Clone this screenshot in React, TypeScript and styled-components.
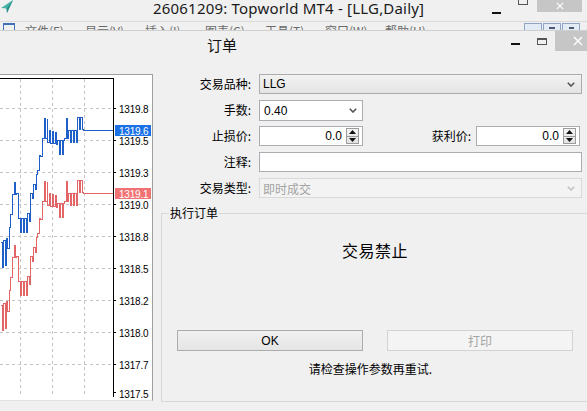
import React from "react";
import styled, { createGlobalStyle } from "styled-components";

const GlobalStyle = createGlobalStyle`
  html, body {
    margin: 0;
    padding: 0;
    background: #f0f0f0;
  }
  body {
    font-family: "Liberation Sans", "Noto Sans CJK SC", sans-serif;
    font-size: 12px;
    color: #000;
  }
  * {
    box-sizing: border-box;
  }
`;

const CJK = `"Noto Sans CJK SC", "Liberation Sans", sans-serif`;

// ---- price chart data ----
type Seg = [number, number, number, number, number];

// blue (ask) tick trajectory: [xStart, xEnd, yStart, yEnd, jitter]
const SEGS: Seg[] = [
  [0, 7, 255, 250, 13],
  [7, 12, 246, 190, 2],
  [12, 16, 188, 188, 6],
  [16, 18, 195, 222, 2],
  [18, 27, 225, 225, 7],
  [27, 30, 220, 208, 7],
  [30, 37, 198, 176, 5],
  [37, 42, 166, 142, 4],
  [42, 47, 128, 128, 10],
  [47, 57, 136, 138, 6],
  [57, 64, 147, 147, 7],
  [64, 68, 128, 128, 10],
  [68, 77, 136, 136, 6],
  [77, 83, 123, 123, 6],
];

const tickPath = (offset: number) => {
  let d = "";
  let i = 0;
  for (const [x0, x1, y0, y1, amp] of SEGS) {
    for (let x = x0; x < x1; x += 1.5) {
      const t = (x - x0) / (x1 - x0);
      const y = Math.round(y0 + (y1 - y0) * t + (i % 2 ? amp : -amp) + offset) + 0.5;
      const px = Math.round(x) + 0.5;
      d += d ? ` H${px} V${y}` : `M${px} ${y}`;
      i++;
    }
  }
  d += ` H83.5 V${130.5 + offset} H113`;
  return d;
};

const PRICES = ["1319.8", "1319.5", "1319.3", "1319.0", "1318.8", "1318.5", "1318.2", "1318.0", "1317.7", "1317.5"];

const MENU = ["文件(F)", "显示(V)", "插入(I)", "图表(C)", "工具(T)", "窗口(W)", "帮助(H)"];

// ---- layout ----
const Screen = styled.div`
  width: 587px;
  height: 411px;
  overflow: hidden;
  background: #f0f0f0;
  display: flex;
  flex-direction: column;
`;

const AppBar = styled.div`
  height: 21px;
  flex-shrink: 0;
  display: flex;
  align-items: flex-start;
  background: #f0f0f0;
`;

const AppTitle = styled.div`
  margin-left: 139px;
  font-family: "Noto Sans", sans-serif;
  font-size: 15px;
  letter-spacing: 0.2px;
  line-height: 17px;
  color: #1a1a1a;
  white-space: nowrap;
`;

const WinControls = styled.div`
  margin-left: auto;
  padding-right: 5px;
  display: flex;
  align-items: flex-start;
`;

const MinGlyph = styled.span<{ $top: number }>`
  display: block;
  width: 9px;
  height: 2px;
  margin-top: ${(p) => p.$top}px;
  background: #111;
`;

const MaxGlyph = styled.span<{ $top: number; $gap: number }>`
  display: block;
  width: 10px;
  height: 7px;
  margin-left: ${(p) => p.$gap}px;
  margin-top: ${(p) => p.$top}px;
  border: 1px solid #555;
  border-top-width: ${(p) => (p.$top < 0 ? 1 : 2)}px;
`;

const CloseBox = styled.span<{ $w: number; $h: number; $gap: number }>`
  display: flex;
  align-items: center;
  justify-content: center;
  width: ${(p) => p.$w}px;
  height: ${(p) => p.$h}px;
  margin-left: ${(p) => p.$gap}px;
  background: #c6c6c6;
  flex-shrink: 0;
`;

const MenuBar = styled.div`
  height: 9px;
  flex-shrink: 0;
  border-top: 1px solid #dadada;
  display: flex;
  align-items: flex-start;
  overflow: hidden;
  background: #f0f0f0;
`;

const MenuIcon = styled.span`
  margin: 1px 0 0 3px;
  width: 12px;
  height: 8px;
  border: 1px solid #3f6fb6;
  border-top-width: 2px;
  flex-shrink: 0;
`;

const MenuItems = styled.div`
  display: flex;
  margin-left: 10px;
`;

const MenuItem = styled.span`
  width: 60px;
  font-family: ${CJK};
  font-size: 12px;
  line-height: 16px;
  margin-top: 1px;
  color: #6a6a6a;
`;

const MdiButtons = styled.div`
  margin-left: auto;
  margin-right: 7px;
  display: flex;
  gap: 1px;
  margin-top: 1px;
`;

const MdiButton = styled.span`
  display: flex;
  justify-content: center;
  width: 18px;
  height: 10px;
  background: #e2ebf6;
  border: 1px solid #8fa4c4;
  padding-top: 3px;
`;

const MdiMark = styled.span<{ $w: number }>`
  width: ${(p) => p.$w}px;
  height: 2px;
  background: #4a5a70;
`;

const Dialog = styled.div`
  flex: 1;
  display: flex;
  flex-direction: column;
  border-top: 1px solid #cfcfcf;
  background: #f0f0f0;
`;

const DialogBar = styled.div`
  height: 20px;
  flex-shrink: 0;
  display: flex;
  align-items: flex-start;
`;

const DialogTitle = styled.div`
  margin-left: 207px;
  margin-top: 5px;
  font-family: ${CJK};
  font-size: 15px;
  line-height: 17px;
  color: #111;
`;

const DialogControls = styled.div`
  margin-left: auto;
  margin-right: -14px;
  display: flex;
  align-items: flex-start;
`;

const Body = styled.div`
  display: flex;
  align-items: flex-start;
`;

const ChartPane = styled.div`
  margin-top: 23px;
  width: 153px;
  height: 327px;
  flex-shrink: 0;
  background: #fff;
  border-top: 1px solid #a0a0a0;
  border-right: 1px solid #a0a0a0;
  border-bottom: 1px solid #e2e2e2;
`;

const FormPane = styled.div`
  width: 436px;
  padding: 23px 0 0 8px;
  flex-shrink: 0;
`;

const FormGrid = styled.div`
  display: grid;
  grid-template-columns: 90px 323px;
  grid-auto-rows: 20px;
  column-gap: 8px;
  row-gap: 6px;
`;

const Label = styled.div`
  text-align: right;
  font-family: ${CJK};
  font-size: 12px;
  line-height: 20px;
  white-space: nowrap;
`;

const Select = styled.div<{ $disabled?: boolean }>`
  display: flex;
  align-items: center;
  height: 20px;
  padding: 0 6px 0 3px;
  border: 1px solid ${(p) => (p.$disabled ? "#d9d9d9" : "#acacac")};
  background: ${(p) => (p.$disabled ? "#f3f3f3" : "linear-gradient(#f2f2f2, #e4e4e4)")};
  color: ${(p) => (p.$disabled ? "#a3a3a3" : "#000")};
  font-family: ${(p) => (p.$disabled ? CJK : `"Liberation Sans", sans-serif`)};
  font-size: 12px;
`;

const Combo = styled.div`
  display: flex;
  align-items: center;
  width: 104px;
  height: 21px;
  padding: 0 5px 0 4px;
  border: 1px solid #abadb3;
  background: #fff;
  font-size: 12px;
`;

const Value = styled.span`
  flex: 1;
`;

const FieldRow = styled.div`
  display: flex;
  align-items: center;
`;

const TPLabel = styled(Label)`
  flex: 1;
  padding-right: 5px;
`;

const SpinBox = styled.div<{ $right?: number }>`
  display: flex;
  align-items: center;
  width: 104px;
  height: 20px;
  margin-right: ${(p) => p.$right ?? 0}px;
  border: 1px solid #abadb3;
  background: #fff;
  font-size: 12px;
`;

const SpinValue = styled.span`
  flex: 1;
  text-align: right;
  padding-right: 4px;
`;

const Spinner = styled.span`
  display: flex;
  flex-direction: column;
  width: 13px;
  height: 16px;
  margin-right: 3px;
  border: 1px solid #9c9c9c;
  background: linear-gradient(#f4f4f4, #e2e2e2);
`;

const SpinHalf = styled.span<{ $down?: boolean }>`
  flex: 1;
  display: flex;
  align-items: center;
  justify-content: center;
  border-top: ${(p) => (p.$down ? "1px solid #9c9c9c" : "none")};
`;

const TextBox = styled.div`
  height: 20px;
  border: 1px solid #abadb3;
  background: #fff;
`;

const Group = styled.div`
  position: relative;
  margin-top: 15px;
  width: 428px;
  height: 189px;
  border: 1px solid #d8d8d8;
  display: flex;
  flex-direction: column;
  align-items: center;
`;

const Legend = styled.span`
  position: absolute;
  top: -8px;
  left: 7px;
  padding: 0 1px;
  background: #f0f0f0;
  font-family: ${CJK};
  font-size: 12px;
  line-height: 14px;
`;

const Status = styled.div`
  margin-top: 26px;
  font-family: ${CJK};
  font-size: 16px;
  line-height: 20px;
  letter-spacing: 0.5px;
`;

const ButtonRow = styled.div`
  margin-top: 70px;
  display: flex;
  gap: 24px;
`;

const Button = styled.button<{ $disabled?: boolean }>`
  width: 186px;
  height: 21px;
  padding: 0;
  border: 1px solid ${(p) => (p.$disabled ? "#d3d3d3" : "#acacac")};
  background: ${(p) => (p.$disabled ? "#f4f4f4" : "linear-gradient(#f0f0f0, #e5e5e5)")};
  color: ${(p) => (p.$disabled ? "#a4a4a4" : "#000")};
  font-family: "Liberation Sans", "Noto Sans CJK SC", sans-serif;
  font-size: 12px;
`;

const Message = styled.div`
  margin-top: 10px;
  padding-right: 9px;
  font-family: ${CJK};
  font-size: 12px;
  line-height: 16px;
`;

// ---- small drawings ----
const Chevron = ({ color = "#555" }: { color?: string }) => (
  <svg width="8" height="5" viewBox="0 0 8 5">
    <polyline points="0.8,0.8 4,4 7.2,0.8" fill="none" stroke={color} strokeWidth="1.6" />
  </svg>
);

const Tri = ({ down }: { down?: boolean }) => (
  <svg width="7" height="4" viewBox="0 0 7 4">
    <polygon points={down ? "0,0 7,0 3.5,4" : "0,4 7,4 3.5,0"} fill="#111" />
  </svg>
);

const CloseX = ({ size }: { size: number }) => (
  <svg width={size} height={size} viewBox="0 0 10 10">
    <path d="M1 1 L9 9 M9 1 L1 9" stroke="#fff" strokeWidth="1.4" />
  </svg>
);

const AppIcon = () => (
  <svg width="14" height="14" viewBox="0 0 14 14">
    <polygon points="1,8 13,0 7,13 6.5,8.5" fill="#48b3a8" />
    <polygon points="6.5,8.5 13,0 7,13" fill="#2b8f86" />
  </svg>
);

const SpinField = ({ right }: { right?: number }) => (
  <SpinBox $right={right}>
    <SpinValue>0.0</SpinValue>
    <Spinner>
      <SpinHalf>
        <Tri />
      </SpinHalf>
      <SpinHalf $down>
        <Tri down />
      </SpinHalf>
    </Spinner>
  </SpinBox>
);

const labelFont = { fontFamily: "Liberation Sans, sans-serif", fontSize: 10, letterSpacing: -0.2 };

const TickChart = () => (
  <svg width="152" height="326" viewBox="0 75 152 326" style={{ display: "block" }}>
    <defs>
      <clipPath id="plot">
        <rect x="0" y="79" width="113" height="318" />
      </clipPath>
    </defs>
    <g stroke="#c4c4c4" strokeDasharray="3 3" shapeRendering="crispEdges">
      {[20.5, 52.5, 84.5].map((x) => (
        <line key={x} x1={x} y1="79" x2={x} y2="397" />
      ))}
      {PRICES.slice(0, 9).map((_, i) => (
        <line key={i} x1="0" y1={108.5 + i * 32} x2="113" y2={108.5 + i * 32} />
      ))}
    </g>
    <g clipPath="url(#plot)" fill="none" shapeRendering="crispEdges">
      <path d={tickPath(63)} stroke="#e26666" />
      <path d={tickPath(0)} stroke="#1f5fc8" />
    </g>
    <g stroke="#000" shapeRendering="crispEdges">
      <line x1="0" y1="78.5" x2="113.5" y2="78.5" />
      <line x1="113.5" y1="78" x2="113.5" y2="397" />
      {PRICES.map((_, i) => (
        <line key={i} x1="113" y1={108.5 + i * 32 - (i === 9 ? 4 : 0)} x2="116" y2={108.5 + i * 32 - (i === 9 ? 4 : 0)} />
      ))}
    </g>
    <g style={labelFont} fill="#000">
      {PRICES.map((p, i) => (
        <text key={p} x="119" y={112.5 + i * 32 - (i === 9 ? 3 : 0)}>
          {p}
        </text>
      ))}
    </g>
    <rect x="115" y="125" width="36" height="11" fill="#1a72e6" />
    <text x="119" y="134.5" style={labelFont} fill="#fff">
      1319.6
    </text>
    <rect x="115" y="188" width="36" height="11" fill="#f07272" />
    <text x="119" y="197.5" style={labelFont} fill="#fff">
      1319.1
    </text>
  </svg>
);

export default function App() {
  return (
    <>
      <GlobalStyle />
      <Screen>
        <AppBar>
          <AppIcon />
          <AppTitle>26061209: Topworld MT4 - [LLG,Daily]</AppTitle>
          <WinControls>
            <MinGlyph $top={12} />
            <MaxGlyph $top={-2} $gap={17} />
            <CloseBox $w={45} $h={12} $gap={9}>
              <CloseX size={8} />
            </CloseBox>
          </WinControls>
        </AppBar>

        <MenuBar>
          <MenuIcon />
          <MenuItems>
            {MENU.map((m) => (
              <MenuItem key={m}>{m}</MenuItem>
            ))}
          </MenuItems>
          <MdiButtons>
            <MdiButton>
              <MdiMark $w={0} />
            </MdiButton>
            <MdiButton>
              <MdiMark $w={6} />
            </MdiButton>
            <MdiButton>
              <MdiMark $w={5} />
            </MdiButton>
          </MdiButtons>
        </MenuBar>

        <Dialog>
          <DialogBar>
            <DialogTitle>订单</DialogTitle>
            <DialogControls>
              <MinGlyph $top={12} />
              <MaxGlyph $top={7} $gap={17} />
              <CloseBox $w={46} $h={20} $gap={8}>
                <CloseX size={10} />
              </CloseBox>
            </DialogControls>
          </DialogBar>

          <Body>
            <ChartPane>
              <TickChart />
            </ChartPane>

            <FormPane>
              <FormGrid>
                <Label>交易品种:</Label>
                <Select>
                  <Value>LLG</Value>
                  <Chevron />
                </Select>

                <Label>手数:</Label>
                <Combo>
                  <Value>0.40</Value>
                  <Chevron />
                </Combo>

                <Label>止损价:</Label>
                <FieldRow>
                  <SpinField />
                  <TPLabel>获利价:</TPLabel>
                  <SpinField right={2} />
                </FieldRow>

                <Label>注释:</Label>
                <TextBox />

                <Label>交易类型:</Label>
                <Select $disabled>
                  <Value>即时成交</Value>
                  <Chevron color="#c2c2c2" />
                </Select>
              </FormGrid>

              <Group>
                <Legend>执行订单</Legend>
                <Status>交易禁止</Status>
                <ButtonRow>
                  <Button>OK</Button>
                  <Button $disabled>打印</Button>
                </ButtonRow>
                <Message>请检查操作参数再重试.</Message>
              </Group>
            </FormPane>
          </Body>
        </Dialog>
      </Screen>
    </>
  );
}
